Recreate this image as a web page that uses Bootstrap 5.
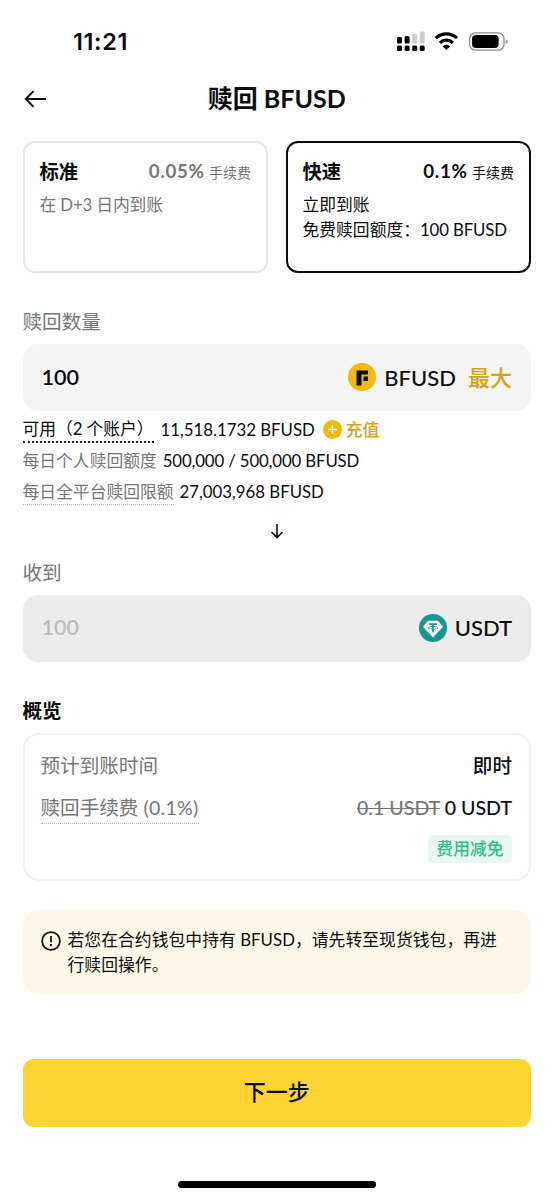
<!DOCTYPE html>
<html lang="zh-CN">
<head>
<meta charset="utf-8">
<meta name="viewport" content="width=device-width, initial-scale=1">
<title>赎回 BFUSD</title>
<link href="https://cdn.jsdelivr.net/npm/bootstrap@5.3.0/dist/css/bootstrap.min.css" rel="stylesheet">
<style>
body{font-family:Lato,"Noto Sans CJK SC",sans-serif;color:#0b0c0e;background:#fefefe;font-size:16.8px;line-height:25px;overflow:hidden}
.screen{width:554px;height:1200px;padding:0 23px 0 22.5px}
.text-soft{color:#767676}
.status{height:66px;padding:16px 22px 0 50.5px}
.clock{font:600 23.5px/30px Inter,sans-serif;letter-spacing:.6px}
.topbar{height:66px}
.title{font-size:25px;padding-bottom:2px}
.plans{gap:17.5px;margin-top:9px}
.plan{height:132px;border:2px solid #e6e6e6;border-radius:12px;padding:14.5px 15px 0;flex:1 1 0}
.plan.active{border-color:#0b0c0e}
.plan-name{font-size:19.3px}
.rate{font-size:18.8px;letter-spacing:.7px}
.fee{font-size:14px}
.desc{margin-top:7.5px}
.label{height:30px;font-size:19.6px;line-height:32px}
.field{height:67px;border-radius:15px;background:#f4f4f4;padding:0 19px 1px;font-size:22px}
.field.off{background:#ececec}
.amount{font-size:21.6px}
.info{height:31px}
.figures{margin-left:6px;padding-bottom:1px}
.tight{letter-spacing:-.13px}
.dots{border-bottom:2px dotted #222}
.dots.pale{border-bottom:1.5px dotted #bdbdbd}
.gold{color:#d3a21a}
.summary{height:148px;border:2px solid #f2f2f2;border-radius:16px;padding:15px 17px 0 16px;font-size:19.6px}
.waive{background:#e9f7f2;color:#2ebd85;border-radius:5px;font-size:16.8px;height:28px;line-height:28px;padding:0 8.5px}
.notice{height:83.5px;border-radius:16px;background:#fdf9e8;padding:17px 18px 0}
.next{height:68px;border-radius:11px;background:#fcd535;font-size:22px;margin-top:65.5px;color:#0b0c0e}
.homebar{width:198px;height:7px;border-radius:4px;background:#000;margin-top:54px}
svg{display:block;flex:none}
</style>
</head>
<body>
<main class="screen d-flex flex-column">
  <div class="status d-flex justify-content-between align-items-start">
    <div class="clock" style="margin-top:11px">11:21</div>
    <svg width="112" height="24" viewBox="0 0 112 24" style="margin-top:13px">
      <g fill="#000"><rect x="0" y="8" width="5" height="6.500" rx="1.500"/><rect x="7.600" y="7" width="5" height="7.500" rx="1.500"/><rect x="0" y="16.500" width="5" height="5.500" rx="1.500"/><rect x="7.600" y="16.500" width="5" height="5.500" rx="1.500"/><rect x="15.200" y="16.500" width="5" height="5.500" rx="1.500"/><rect x="22.700" y="16.500" width="5" height="5.500" rx="1.500"/></g>
      <g fill="#ccc"><rect x="15.200" y="5" width="5" height="9.500" rx="1.500"/><rect x="22.700" y="2.500" width="5" height="12" rx="1.500"/></g>
      <g fill="none" stroke="#000" stroke-width="3.200"><path d="M38.700 9.200a15.500 15.500 0 0 1 21.400 0"/><path d="M42.900 13.800a9.400 9.400 0 0 1 13 0"/></g>
      <path d="M45.500 17.200a5.700 5.700 0 0 1 7.800 0L49.400 21z"/>
      <rect x="72.700" y="3.800" width="34.300" height="17.400" rx="5.800" fill="none" stroke="#8c8c8c" stroke-width="1.300"/>
      <rect x="75.100" y="6" width="26.500" height="13" rx="3.800"/>
      <path d="M108.700 10.200q2.200.8 2.200 2.400t-2.200 2.400z" fill="#999"/>
    </svg>
  </div>
  <header class="topbar d-flex align-items-center">
    <svg width="24" height="20" viewBox="0 0 24 20" fill="none" stroke="#0b0c0e" stroke-width="1.900"><path d="M2.800 10H23M10.500 2.200 2.800 10l7.700 7.800"/></svg>
    <h1 class="title fw-bold m-0 flex-grow-1 text-center pe-4">赎回 BFUSD</h1>
  </header>
  <section class="plans d-flex">
    <div class="plan">
      <div class="d-flex justify-content-between align-items-center"><span class="plan-name fw-bold">标准</span><span class="text-soft"><b class="rate">0.05%</b> <span class="fee">手续费</span></span></div>
      <div class="text-soft desc tight">在 D+3 日内到账</div>
    </div>
    <div class="plan active">
      <div class="d-flex justify-content-between align-items-center"><span class="plan-name fw-bold">快速</span><span><b class="rate">0.1%</b> <span class="fee">手续费</span></span></div>
      <div class="desc">立即到账</div>
      <div class="text-nowrap">免费赎回额度：<span class="tight">100 BFUSD</span></div>
    </div>
  </section>
  <div class="label text-soft" style="margin-top:33px">赎回数量</div>
  <div class="field d-flex align-items-center mt-2">
    <span class="amount fw-semibold me-auto">100</span>
    <svg width="28" height="28" viewBox="0 0 28 28"><circle cx="14" cy="14" r="14" fill="#f0b90b"/><path d="M8.500 7.500H20v4h-6.500v11h-5zM15.500 13.500H20v4.500h-4.500z" fill="#0b0c0e"/></svg>
    <span class="fw-medium ms-2">BFUSD</span><span class="gold fw-medium ms-2 ps-1">最大</span>
  </div>
  <div style="margin-top:3px">
    <div class="info d-flex align-items-center"><span class="dots" style="letter-spacing:-.05px">可用（2 个账户）</span><span class="figures" style="margin-left:7px">11,518.1732 BFUSD</span>
      <svg class="ms-2" width="19" height="19" viewBox="0 0 19 19"><circle cx="9.500" cy="9.500" r="9.500" fill="#f0b90b"/><path d="M9.500 5v9M5 9.500h9" stroke="#fff" stroke-width="1.600"/></svg><span class="gold fw-medium ms-1">充值</span></div>
    <div class="info d-flex align-items-center"><span class="text-soft">每日个人赎回额度</span><span class="figures tight">500,000 / 500,000 BFUSD</span></div>
    <div class="info d-flex align-items-center"><span class="text-soft dots pale">每日全平台赎回限额</span><span class="figures">27,003,968 BFUSD</span></div>
  </div>
  <div class="d-flex justify-content-center align-items-center" style="height:48px"><svg width="14" height="16" viewBox="0 0 14 16" fill="none" stroke="#0b0c0e" stroke-width="1.600"><path d="M7 1v13.500M1.500 9 7 14.500 12.500 9"/></svg></div>
  <div class="label text-soft" style="margin-top:2px">收到</div>
  <div class="field off d-flex align-items-center" style="margin-top:7.500px">
    <span class="amount fw-semibold me-auto" style="color:#bcbcbc">100</span>
    <svg width="28" height="28" viewBox="0 0 28 28"><circle cx="14" cy="14" r="14" fill="#169890"/><path d="M9 6.800h10L24 12.800 14 23.500 4 12.800z" fill="#fff"/><path d="M10 10.200h8M14 10.200v8.300" stroke="#169890" stroke-width="1.700" fill="none"/><ellipse cx="14" cy="13.800" rx="5" ry="1.400" stroke="#169890" fill="none" stroke-width=".8"/></svg>
    <span class="fw-medium ms-2">USDT</span>
  </div>
  <div class="label fw-bold" style="margin-top:33.500px">概览</div>
  <section class="summary mt-2">
    <div class="d-flex justify-content-between align-items-center" style="height:31px"><span class="text-soft">预计到账时间</span><span class="fw-medium">即时</span></div>
    <div class="d-flex justify-content-between align-items-center" style="height:31px;margin-top:12px"><span class="text-soft dots pale" style="line-height:30px">赎回手续费 <span style="letter-spacing:.25px">(0.1%)</span></span><span class="fw-medium" style="padding-bottom:2px"><s class="text-soft">0.1 USDT</s> 0 USDT</span></div>
    <div class="d-flex justify-content-end" style="margin-top:11px"><span class="waive fw-medium">费用减免</span></div>
  </section>
  <section class="notice d-flex" style="margin-top:29px">
    <svg class="mt-1" width="20" height="20" viewBox="0 0 20 20"><circle cx="10" cy="10" r="8.900" fill="none" stroke="#16150f" stroke-width="1.800"/><path d="M10 5v6.300M10 13v2.200" stroke="#16150f" stroke-width="1.800"/></svg>
    <div class="text-nowrap" style="margin-left:7px;letter-spacing:.05px">若您在合约钱包中持有 BFUSD，请先转至现货钱包，再进<br>行赎回操作。</div>
  </section>
  <button class="next btn w-100 border-0 fw-medium p-0 pb-1">下一步</button>
  <div class="homebar align-self-center"></div>
</main>
<script src="https://cdn.jsdelivr.net/npm/bootstrap@5.3.0/dist/js/bootstrap.bundle.min.js"></script>
</body>
</html>
